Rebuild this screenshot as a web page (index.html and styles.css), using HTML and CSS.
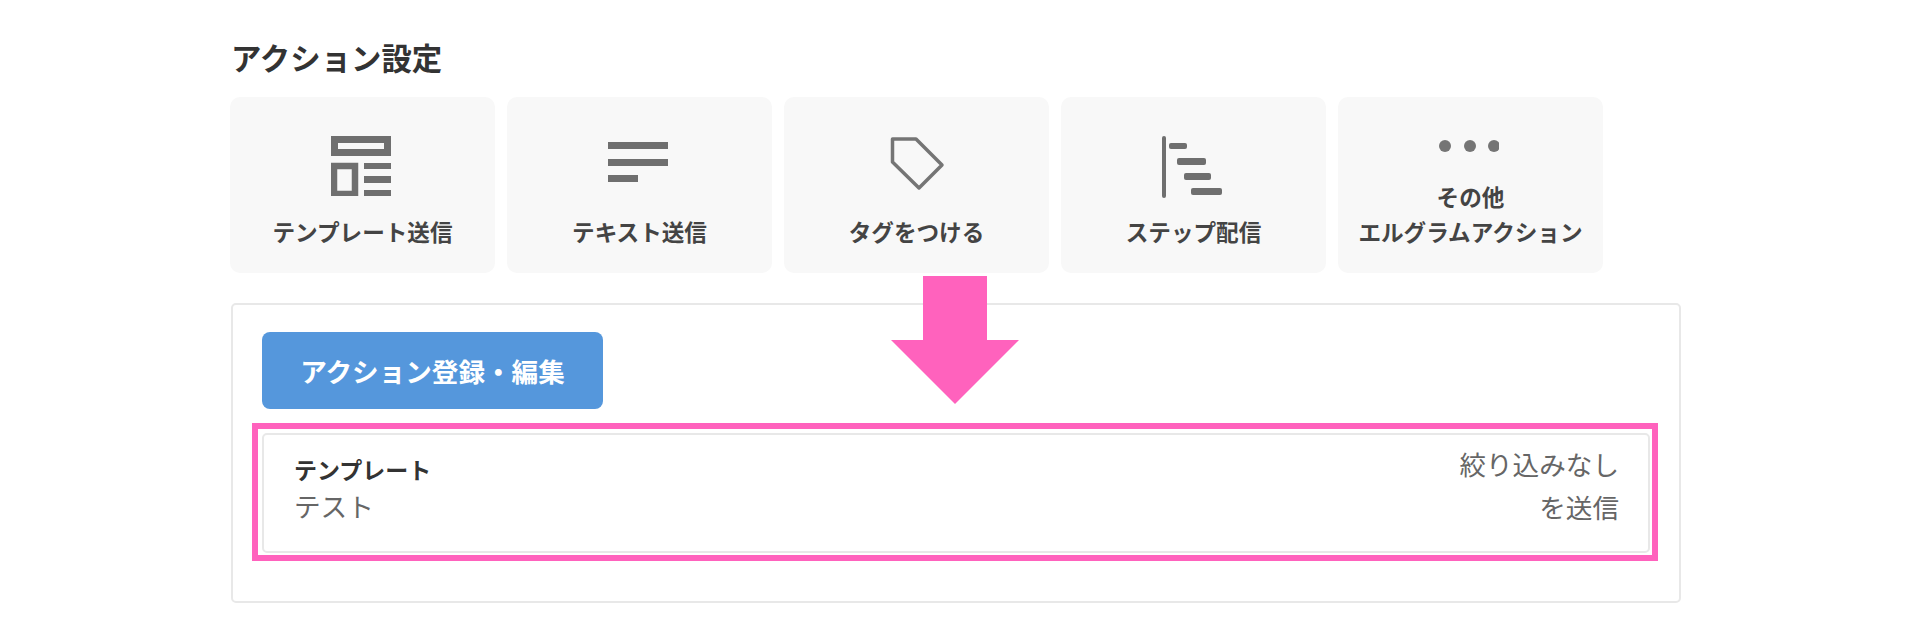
FILE: index.html
```html
<!DOCTYPE html>
<html lang="ja">
<head>
    <meta charset="UTF-8">
    <title>アクション設定</title>
    <link rel="stylesheet" href="styles.css">
</head>
<body>
    <div class="page">
        <h2 class="title">アクション設定</h2>

        <div class="cards">
            <div class="card">
                <svg class="icon" viewBox="0 0 60 60" width="60" height="60">
                    <rect x="3.5" y="3.5" width="53" height="13" fill="none" stroke="#6f6f6f" stroke-width="7"/>
                    <rect x="3" y="30" width="21" height="28" fill="none" stroke="#6f6f6f" stroke-width="6.5"/>
                    <rect x="33" y="27" width="27" height="6" fill="#6f6f6f"/>
                    <rect x="33" y="40" width="27" height="7" fill="#6f6f6f"/>
                    <rect x="33" y="54" width="27" height="7" fill="#6f6f6f"/>
                </svg>
                <div class="card-label">テンプレート送信</div>
            </div>
            <div class="card">
                <svg class="icon" viewBox="0 0 60 60" width="60" height="60">
                    <rect x="0" y="6" width="60" height="7" fill="#6f6f6f"/>
                    <rect x="0" y="23" width="60" height="7" fill="#6f6f6f"/>
                    <rect x="0" y="39" width="30" height="7" fill="#6f6f6f"/>
                </svg>
                <div class="card-label">テキスト送信</div>
            </div>
            <div class="card">
                <svg class="icon" viewBox="0 0 60 60" width="60" height="60">
                    <path d="M7.5 3H31L57 29L34 52L7.5 26Z" fill="none" stroke="#757575" stroke-width="3.5" stroke-linejoin="round"/>
                </svg>
                <div class="card-label">タグをつける</div>
            </div>
            <div class="card">
                <svg class="icon" viewBox="0 0 60 62" width="60" height="62">
                    <rect x="0" y="0" width="4" height="62" rx="2" fill="#6f6f6f"/>
                    <rect x="7" y="7" width="18" height="6" rx="2" fill="#6f6f6f"/>
                    <rect x="15" y="22" width="29" height="7" rx="2" fill="#6f6f6f"/>
                    <rect x="22" y="37" width="27" height="7" rx="2" fill="#6f6f6f"/>
                    <rect x="29" y="52" width="31" height="7" rx="2" fill="#6f6f6f"/>
                </svg>
                <div class="card-label card-label-tight">ステップ配信</div>
            </div>
            <div class="card">
                <svg class="icon icon-small" viewBox="0 0 60 14" width="60" height="14">
                    <circle cx="6" cy="7" r="6" fill="#757575"/>
                    <circle cx="31" cy="7" r="6" fill="#757575"/>
                    <circle cx="55" cy="7" r="6" fill="#757575"/>
                </svg>
                <div class="card-label">その他<br>エルグラムアクション</div>
            </div>
        </div>

        <div class="panel">
            <button class="action-button">アクション登録・編集</button>
            <div class="highlight">
                <div class="action-row">
                    <div>
                        <div class="action-type">テンプレート</div>
                        <div class="action-name">テスト</div>
                    </div>
                    <div class="action-note">絞り込みなし<br>を送信</div>
                </div>
            </div>
        </div>

        <svg class="arrow" viewBox="0 0 128 128" width="128" height="128">
            <polygon points="32,0 96,0 96,64 128,64 64,128 0,64 32,64" fill="#ff62bd"/>
        </svg>
    </div>
</body>
</html>
```

FILE: styles.css
```css
body {
    margin: 0;
    background: #fff;
    font-family: "Liberation Sans", "Noto Sans CJK JP", sans-serif;
    color: #444;
}
.page {
    position: relative;
    width: 1450px;
    height: 640px;
    padding-left: 231px;
    overflow: hidden;
}
.title {
    margin: 0;
    padding-top: 39px;
    font-size: 30.4px;
    line-height: 40px;
    font-weight: 700;
    color: #333;
}
.cards {
    display: flex;
    gap: 12px;
    margin: 18px 0 0 -1px;
}
.card {
    width: 265px;
    height: 176px;
    box-sizing: border-box;
    padding-top: 39px;
    background: #f8f8f8;
    border-radius: 10px;
    text-align: center;
}
.icon {
    display: block;
    margin: 0 auto;
    transform: translateX(-2px);
}
.icon-small {
    margin-top: 3px;
    margin-bottom: 28px;
}
.card-label {
    margin-top: 20px;
    font-size: 22.6px;
    line-height: 35px;
    font-weight: 700;
}
.card-label-tight {
    margin-top: 18px;
}
.panel {
    width: 1450px;
    height: 300px;
    box-sizing: border-box;
    margin-top: 30px;
    padding: 27px 21px 0 29px;
    border: 2px solid #e8e8e8;
    border-radius: 5px;
}
.action-button {
    display: block;
    width: 341px;
    height: 77px;
    padding: 0;
    border: none;
    border-radius: 8px;
    background: #5597dc;
    color: #fff;
    font-family: inherit;
    font-size: 26.6px;
    font-weight: 700;
}
.highlight {
    margin: 14px 0 0 -10px;
    padding: 4px 2px 2px 4px;
    border: 6px solid #ff62bd;
}
.action-row {
    display: flex;
    justify-content: space-between;
    height: 120px;
    box-sizing: border-box;
    padding: 16px 29px 0 30px;
    border: 2px solid #e8e8e8;
    border-radius: 5px;
}
.action-type {
    font-size: 23px;
    line-height: 40px;
    font-weight: 700;
    color: #333;
}
.action-name,
.action-note {
    font-size: 26.6px;
    color: #666;
}
.action-name {
    line-height: 34px;
}
.action-note {
    margin-top: -6px;
    line-height: 43px;
    text-align: right;
}
.arrow {
    position: absolute;
    left: 891px;
    top: 276px;
}
```
